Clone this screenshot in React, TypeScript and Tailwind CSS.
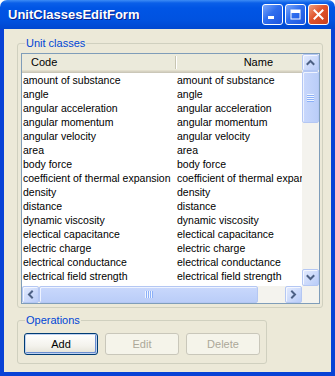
import React from "react";

const rows = [
  "amount of substance",
  "angle",
  "angular acceleration",
  "angular momentum",
  "angular velocity",
  "area",
  "body force",
  "coefficient of thermal expansion",
  "density",
  "distance",
  "dynamic viscosity",
  "electical capacitance",
  "electric charge",
  "electrical conductance",
  "electrical field strength",
];

type Dir = "up" | "down" | "left" | "right";

function Chevron({ dir }: { dir: Dir }) {
  const d: Record<Dir, string> = {
    up: "M1.5 6 L4.5 3 L7.5 6",
    down: "M1.5 3 L4.5 6 L7.5 3",
    left: "M6 1.5 L3 4.5 L6 7.5",
    right: "M3 1.5 L6 4.5 L3 7.5",
  };
  return (
    <svg width="9" height="9" viewBox="0 0 9 9">
      <path d={d[dir]} fill="none" stroke="#4D6185" strokeWidth="2" strokeLinecap="square" />
    </svg>
  );
}

function ScrollBtn({ dir }: { dir: Dir }) {
  return (
    <div className="w-[17px] h-[17px] shrink-0 rounded-[2px] border border-[#B4C7F3] bg-[linear-gradient(135deg,#E3EBFE,#B9CCF8)] shadow-[inset_1px_1px_0_#F4F7FF] flex items-center justify-center">
      <Chevron dir={dir} />
    </div>
  );
}

function GripV() {
  return (
    <div className="flex flex-col gap-[1px]">
      {[0, 1, 2, 3].map((i) => (
        <div key={i} className="w-[7px] h-[1px] bg-[#EEF4FE] shadow-[0_1px_0_#8CB0F8]" />
      ))}
    </div>
  );
}

function GripH() {
  return (
    <div className="flex flex-row gap-[1px]">
      {[0, 1, 2, 3].map((i) => (
        <div key={i} className="h-[7px] w-[1px] bg-[#EEF4FE] shadow-[1px_0_0_#8CB0F8]" />
      ))}
    </div>
  );
}

function TitleButton({ kind }: { kind: "min" | "max" | "close" }) {
  const base =
    "w-[21px] h-[21px] rounded-[3px] border border-white flex items-center justify-center";
  if (kind === "close") {
    return (
      <div className={`${base} bg-[linear-gradient(135deg,#F0A080,#E0532B_45%,#C8401E)]`}>
        <svg width="11" height="11" viewBox="0 0 11 11">
          <path d="M1.5 1.5 L9.5 9.5 M9.5 1.5 L1.5 9.5" stroke="white" strokeWidth="2" strokeLinecap="square" />
        </svg>
      </div>
    );
  }
  return (
    <div className={`${base} bg-[linear-gradient(135deg,#7CA8FB,#2F6EEE_45%,#1C55E0)]`}>
      {kind === "min" ? (
        <svg width="11" height="11" viewBox="0 0 11 11">
          <rect x="1" y="7" width="6" height="3" fill="white" />
        </svg>
      ) : (
        <svg width="11" height="11" viewBox="0 0 11 11">
          <rect x="1" y="1" width="9" height="9" fill="none" stroke="white" strokeWidth="1" />
          <rect x="1" y="1" width="9" height="3" fill="white" />
        </svg>
      )}
    </div>
  );
}

function XPButton({ label, disabled, isDefault }: { label: string; disabled?: boolean; isDefault?: boolean }) {
  if (disabled) {
    return (
      <div className="w-[74px] h-[22px] rounded-[3px] border border-[#C9C7BA] bg-[#F5F4EA] text-[#ACA899] flex items-center justify-center text-[11px]">
        {label}
      </div>
    );
  }
  return (
    <div
      className={`w-[74px] h-[22px] rounded-[3px] border border-[#003C74] bg-[linear-gradient(180deg,#FFFFFF,#F3F2EC_60%,#E3E1D6)] text-black flex items-center justify-center text-[11px] ${
        isDefault ? "shadow-[inset_0_0_0_1px_#C0D2F0,inset_-1px_-1px_0_1px_#6A8ED0]" : ""
      }`}
    >
      {label}
    </div>
  );
}

export default function App() {
  return (
    <div
      className="w-[335px] h-[376px] flex flex-col bg-white"
      style={{ fontFamily: '"Liberation Sans", Arial, sans-serif' }}
    >
      {/* Title bar */}
      <div className="h-[29px] shrink-0 rounded-t-[7px] bg-[linear-gradient(180deg,#3D8CF5_0px,#0A5FE8_3px,#0055E5_8px,#0052E0_20px,#0047D0_29px)] flex items-center pl-[8px] pr-[6px]">
        <div className="flex-1 text-white font-bold text-[13px] [text-shadow:1px_1px_0_#0A1E8A]">
          UnitClassesEditForm
        </div>
        <div className="flex gap-[2px]">
          <TitleButton kind="min" />
          <TitleButton kind="max" />
          <TitleButton kind="close" />
        </div>
      </div>

      {/* Client area */}
      <div className="flex-1 flex flex-col bg-[#ECE9D8] border-x-4 border-b-4 border-[#0842D6] pt-[14px] pl-[13px] pr-[8px]">
        {/* Unit classes group */}
        <div className="relative h-[265px] shrink-0 border border-[#D0D0BF] rounded-[3px] pt-[9px] pl-[3px] pr-[2px] pb-[3px] flex flex-col">
          <div className="absolute left-[7px] top-[-8px] px-[1px] bg-[#ECE9D8] text-[#0046D5] text-[11px] leading-[14px]">
            Unit classes
          </div>
          <div className="flex-1 border border-[#7F9DB9] bg-white grid grid-cols-[1fr_17px] grid-rows-[1fr_17px] text-[11px] text-black">
            {/* content */}
            <div className="overflow-hidden flex flex-col">
              <div className="h-[19px] shrink-0 flex items-center bg-[#EBEADB] shadow-[inset_0_-1px_0_#CBC7B8,inset_0_-2px_0_#D6D2C2,inset_0_-3px_0_#E2DECD]">
                <div className="w-[153px] shrink-0 pl-[9px] pb-[2px]">Code</div>
                <div className="w-[1px] h-[13px] bg-[#C7C5B2] shadow-[1px_0_0_#FFFFFF] mb-[2px]" />
                <div className="w-[102px] shrink-0 text-right pr-[5px] pb-[2px]">Name</div>
              </div>
              <div className="flex flex-col text-[10.5px]">
                {rows.map((r) => (
                  <div key={r} className="h-[14px] leading-[14px] flex whitespace-nowrap">
                    <div className="w-[155px] shrink-0 overflow-hidden pl-[1px]">{r}</div>
                    <div className="shrink-0">{r}</div>
                  </div>
                ))}
              </div>
            </div>
            {/* vertical scrollbar */}
            <div className="flex flex-col bg-[#F4F3EE]">
              <ScrollBtn dir="up" />
              <div className="h-[52px] shrink-0 rounded-[2px] border border-[#B4C7F3] bg-[linear-gradient(90deg,#C9D8FC,#BACDF8)] shadow-[inset_1px_1px_0_#EEF3FF] flex items-center justify-center">
                <GripV />
              </div>
              <div className="flex-1" />
              <ScrollBtn dir="down" />
            </div>
            {/* horizontal scrollbar */}
            <div className="flex flex-row bg-[#F4F3EE]">
              <ScrollBtn dir="left" />
              <div className="w-[219px] shrink-0 rounded-[2px] border border-[#B4C7F3] bg-[linear-gradient(180deg,#C9D8FC,#BACDF8)] shadow-[inset_1px_1px_0_#EEF3FF] flex items-center justify-center">
                <GripH />
              </div>
              <div className="flex-1" />
              <ScrollBtn dir="right" />
            </div>
            <div className="bg-[#F4F3EE]" />
          </div>
        </div>

        {/* Operations group */}
        <div className="relative mt-[12px] w-[250px] h-[44px] shrink-0 border border-[#D0D0BF] rounded-[3px] pt-[12px] pl-[6px] flex gap-[7px]">
          <div className="absolute left-[7px] top-[-8px] px-[1px] bg-[#ECE9D8] text-[#0046D5] text-[11px] leading-[14px]">
            Operations
          </div>
          <XPButton label="Add" isDefault />
          <XPButton label="Edit" disabled />
          <XPButton label="Delete" disabled />
        </div>
      </div>
    </div>
  );
}
